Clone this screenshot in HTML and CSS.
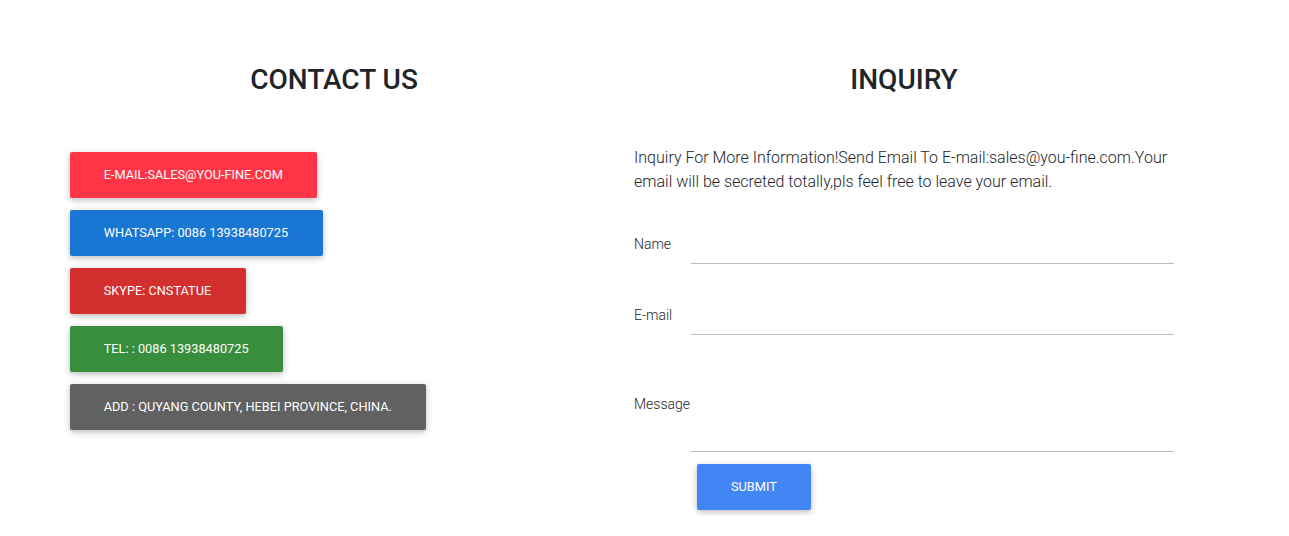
FILE: index.html
```html
<!DOCTYPE html>
<html>
<head>
<meta charset="utf-8">
<link rel="stylesheet" href="styles.css">
</head>
<body>
<div class="page">
  <section class="col">
    <h2 class="title">CONTACT US</h2>
    <div class="btn-list">
      <a class="btn btn-pink">E-MAIL:SALES@YOU-FINE.COM</a>
      <a class="btn btn-blue">WHATSAPP: 0086 13938480725</a>
      <a class="btn btn-red">SKYPE: CNSTATUE</a>
      <a class="btn btn-green">TEL: : 0086 13938480725</a>
      <a class="btn btn-grey">ADD : QUYANG COUNTY, HEBEI PROVINCE, CHINA.</a>
    </div>
  </section>
  <section class="col">
    <h2 class="title">INQUIRY</h2>
    <p class="intro">Inquiry For More Information!Send Email To E-mail:sales@you-fine.com.Your email will be secreted totally,pls feel free to leave your email.</p>
    <form class="form">
      <div class="row row-input">
        <label class="label">Name</label>
        <input class="field" type="text">
      </div>
      <div class="row row-input">
        <label class="label">E-mail</label>
        <input class="field" type="text">
      </div>
      <div class="row row-area">
        <label class="label label-area">Message</label>
        <textarea class="field area"></textarea>
      </div>
      <div class="actions">
        <button class="btn btn-submit" type="button">SUBMIT</button>
      </div>
    </form>
  </section>
</div>
</body>
</html>
```
FILE: styles.css
```css
* { box-sizing: border-box; }
html, body { margin: 0; padding: 0; background: #fff; }
body { font-family: Roboto, "Liberation Sans", Arial, sans-serif; color: #212529; }

.page {
  display: flex;
  padding: 63px 0 0 49px;
}
.col {
  width: 570px;
  padding: 0 15px;
}
.title {
  margin: 0 0 49px;
  font-size: 28px;
  line-height: 33.6px;
  font-weight: 500;
  text-align: center;
  color: #212529;
}
.btn-list {
  display: flex;
  flex-direction: column;
  align-items: flex-start;
}
.btn {
  display: inline-block;
  margin: 6px;
  padding: 13.5px 34.5px 13.5px 33.7px;
  font-family: Roboto, "Liberation Sans", Arial, sans-serif;
  font-size: 12.75px;
  line-height: 19px;
  font-weight: 400;
  color: #fff;
  text-transform: uppercase;
  border: 0;
  border-radius: 2px;
  box-shadow: 0 2px 5px 0 rgba(0,0,0,.16), 0 2px 10px 0 rgba(0,0,0,.12);
  cursor: pointer;
}
.btn-pink { background: #ff3547; }
.btn-blue { background: #1976d2; }
.btn-red { background: #d32f2f; }
.btn-green { background: #388e3c; }
.btn-grey { background: #616161; }

.intro {
  margin: 0 0 31px;
  font-size: 16px;
  line-height: 24px;
  font-weight: 300;
  color: #212529;
}
.form { display: flex; flex-direction: column; }
.row { display: flex; }
.row-input { align-items: center; height: 39px; margin-bottom: 32px; }
.row-area { align-items: flex-start; }
.label {
  width: 57px;
  flex: none;
  font-size: 14px;
  line-height: 21px;
  font-weight: 300;
  color: #212529;
}
.label-area { margin-top: 27px; }
.field {
  flex: 1;
  height: 39px;
  border: 0;
  border-bottom: 1px solid #bdbdbd;
  background: transparent;
  outline: none;
  font: inherit;
  padding: 0;
}
.area { height: 85px; resize: none; }
.actions { padding: 6px 0 0 57px; }
.btn-submit {
  background: #4285f4;
  padding: 13.5px 34.5px 13.5px 34px;
  margin-top: 6px;
}
```
